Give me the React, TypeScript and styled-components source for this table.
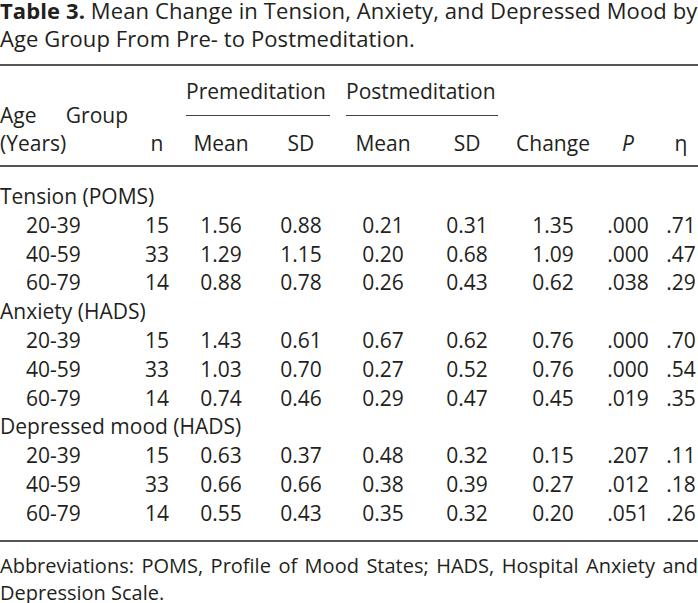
import React from "react";
import styled, { createGlobalStyle } from "styled-components";

const GlobalStyle = createGlobalStyle`
  body {
    margin: 0;
    background: #ffffff;
    font-family: "Open Sans", Lato, sans-serif;
    color: #231f20;
  }
`;

type Row = string[];
type Group = { name: string; rows: Row[] };

const groups: Group[] = [
  {
    name: "Tension (POMS)",
    rows: [
      ["20-39", "15", "1.56", "0.88", "0.21", "0.31", "1.35", ".000", ".71"],
      ["40-59", "33", "1.29", "1.15", "0.20", "0.68", "1.09", ".000", ".47"],
      ["60-79", "14", "0.88", "0.78", "0.26", "0.43", "0.62", ".038", ".29"],
    ],
  },
  {
    name: "Anxiety (HADS)",
    rows: [
      ["20-39", "15", "1.43", "0.61", "0.67", "0.62", "0.76", ".000", ".70"],
      ["40-59", "33", "1.03", "0.70", "0.27", "0.52", "0.76", ".000", ".54"],
      ["60-79", "14", "0.74", "0.46", "0.29", "0.47", "0.45", ".019", ".35"],
    ],
  },
  {
    name: "Depressed mood (HADS)",
    rows: [
      ["20-39", "15", "0.63", "0.37", "0.48", "0.32", "0.15", ".207", ".11"],
      ["40-59", "33", "0.66", "0.66", "0.38", "0.39", "0.27", ".012", ".18"],
      ["60-79", "14", "0.55", "0.43", "0.35", "0.32", "0.20", ".051", ".26"],
    ],
  },
];

const colWidths = [128, 58, 70, 90, 74, 94, 78, 72, 34];

const App = () => {
  return (
    <Page>
      <GlobalStyle />
      <Caption>
        <Lead>Table 3.</Lead> Mean Change in Tension, Anxiety, and Depressed
        Mood by Age Group From Pre- to Postmeditation.
      </Caption>
      <DataTable>
        <colgroup>
          {colWidths.map((w, i) => (
            <col key={i} style={{ width: w }} />
          ))}
        </colgroup>
        <thead>
          <TopRow>
            <AgeHead rowSpan={2}>Age Group (Years)</AgeHead>
            <HeadCell rowSpan={2} $valign="bottom">
              n
            </HeadCell>
            <SpanHead colSpan={2}>
              <Underlined>Premeditation</Underlined>
            </SpanHead>
            <SpanHead colSpan={2}>
              <Underlined>Postmeditation</Underlined>
            </SpanHead>
            <HeadCell rowSpan={2} $valign="bottom">
              Change
            </HeadCell>
            <HeadCell rowSpan={2} $valign="bottom">
              <i>P</i>
            </HeadCell>
            <HeadCell rowSpan={2} $valign="bottom">
              η
            </HeadCell>
          </TopRow>
          <SubRow>
            <HeadCell>Mean</HeadCell>
            <HeadCell>SD</HeadCell>
            <HeadCell>Mean</HeadCell>
            <HeadCell>SD</HeadCell>
          </SubRow>
        </thead>
        <tbody>
          {groups.map((g) => (
            <React.Fragment key={g.name}>
              <tr>
                <GroupCell colSpan={9}>{g.name}</GroupCell>
              </tr>
              {g.rows.map((r) => (
                <tr key={g.name + r[0]}>
                  {r.map((v, i) => (
                    <Cell key={i} $indent={i === 0}>
                      {v}
                    </Cell>
                  ))}
                </tr>
              ))}
            </React.Fragment>
          ))}
        </tbody>
      </DataTable>
      <Note>
        Abbreviations: POMS, Profile of Mood States; HADS, Hospital Anxiety and
        Depression Scale.
      </Note>
    </Page>
  );
};

export default App;

const Page = styled.div`
  width: 698px;
  height: 603px;
  overflow: hidden;
`;

const Caption = styled.div`
  font-size: 22px;
  line-height: 28px;
  margin-top: -4px;
  letter-spacing: 0.1px;
`;

const Lead = styled.b`
  font-weight: 700;
`;

const DataTable = styled.table`
  width: 698px;
  table-layout: fixed;
  border-collapse: collapse;
  margin-top: 12px;
  border-top: 2px solid #555555;
  border-bottom: 2px solid #555555;
  font-size: 21px;

  td,
  th {
    padding: 0;
    font-weight: 400;
  }

  tbody tr:first-child td {
    padding-top: 15px;
  }
  tbody tr:last-child td {
    padding-bottom: 12px;
  }
`;

const TopRow = styled.tr`
  th {
    padding-top: 11px;
  }
`;

const SubRow = styled.tr`
  th {
    padding-top: 13px;
  }
`;

const HeadCell = styled.th<{ $valign?: string }>`
  line-height: 28px;
  text-align: center;
  vertical-align: ${(p) => p.$valign || "top"};
  padding-bottom: 8px !important;
  border-bottom: 2px solid #555555;
`;

const AgeHead = styled.th`
  line-height: 28px;
  text-align: justify;
  vertical-align: bottom;
  padding-bottom: 8px !important;
  border-bottom: 2px solid #555555;
`;

const SpanHead = styled.th`
  line-height: 28px;
  text-align: left;
  vertical-align: top;
  padding-right: 16px !important;
`;

const Underlined = styled.div`
  padding-bottom: 10px;
  border-bottom: 1px solid #444444;
`;

const GroupCell = styled.td`
  line-height: 28.8px;
  text-align: left;
  white-space: nowrap;
`;

const Cell = styled.td<{ $indent?: boolean }>`
  line-height: 28.8px;
  text-align: ${(p) => (p.$indent ? "left" : "center")};
  padding-left: ${(p) => (p.$indent ? "26px" : "0")} !important;
  white-space: nowrap;
`;

const Note = styled.p`
  margin: 10px 0 0;
  font-size: 20px;
  line-height: 27px;
  text-align: justify;
`;
